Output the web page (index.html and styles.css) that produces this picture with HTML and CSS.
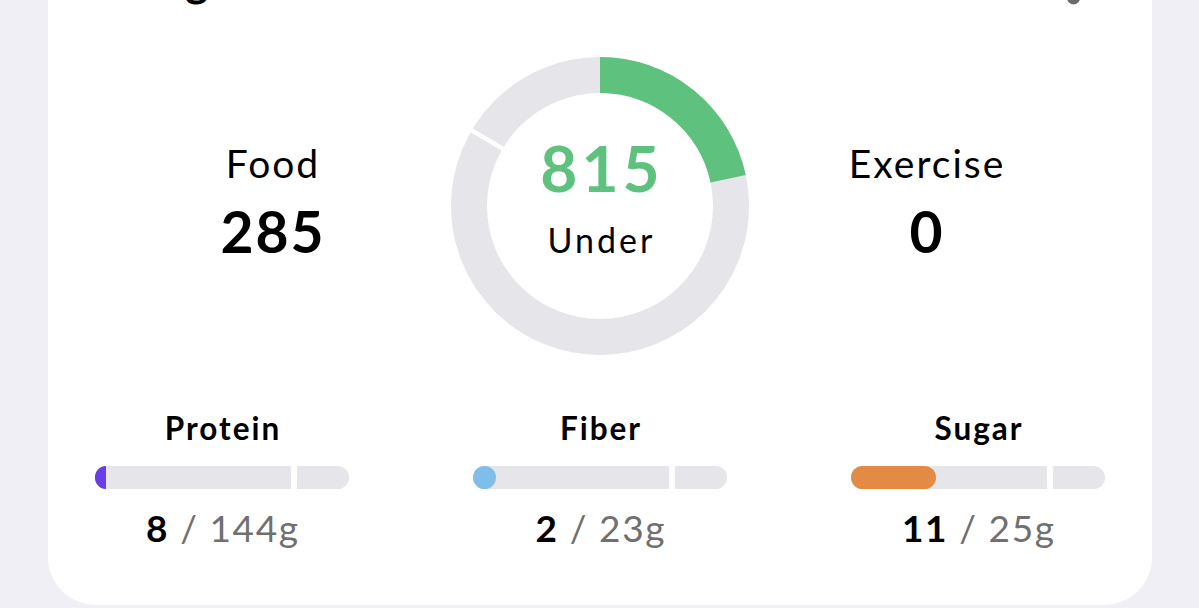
FILE: index.html
```html
<!DOCTYPE html>
<html lang="en">
<head>
<meta charset="utf-8">
<title>Calories</title>
<link rel="stylesheet" href="styles.css">
</head>
<body>
<div class="page">
  <section class="card">
    <header class="card-header">
      <h2 class="card-title">Budget</h2>
      <svg class="more-icon" width="13" height="52" viewBox="0 0 13 52" aria-hidden="true">
        <circle cx="6.5" cy="9" r="6.5"/>
        <circle cx="6.5" cy="27" r="6.5"/>
        <circle cx="6.5" cy="45" r="6.5"/>
      </svg>
    </header>

    <div class="stats">
      <div class="stat">
        <div class="stat-label">Food</div>
        <div class="stat-value">285</div>
      </div>
      <div class="donut">
        <svg width="298" height="298" viewBox="0 0 298 298" aria-hidden="true">
          <circle class="ring-track" cx="149" cy="149" r="131"/>
          <circle class="ring-fill" cx="149" cy="149" r="131" transform="rotate(-90 149 149)" stroke-dasharray="178.3 900"/>
          <line class="ring-gap" x1="149" y1="149" x2="149" y2="-2" transform="rotate(-59.5 149 149)"/>
          <circle class="ring-hole" cx="149" cy="149" r="112.5"/>
        </svg>
        <div class="donut-center">
          <div class="donut-value">815</div>
          <div class="donut-label">Under</div>
        </div>
      </div>
      <div class="stat">
        <div class="stat-label">Exercise</div>
        <div class="stat-value">0</div>
      </div>
    </div>

    <div class="nutrients">
      <div class="nutrient">
        <div class="nutrient-name">Protein</div>
        <div class="bar">
          <div class="bar-main"><div class="bar-fill fill-protein" style="width:11px"></div></div>
          <div class="bar-rest"></div>
        </div>
        <div class="nutrient-value"><b>8</b> <span>/ 144g</span></div>
      </div>
      <div class="nutrient">
        <div class="nutrient-name">Fiber</div>
        <div class="bar">
          <div class="bar-main"><div class="bar-fill fill-fiber" style="width:23px"></div></div>
          <div class="bar-rest"></div>
        </div>
        <div class="nutrient-value"><b>2</b> <span>/ 23g</span></div>
      </div>
      <div class="nutrient">
        <div class="nutrient-name">Sugar</div>
        <div class="bar">
          <div class="bar-main"><div class="bar-fill fill-sugar" style="width:85px"></div></div>
          <div class="bar-rest"></div>
        </div>
        <div class="nutrient-value"><b>11</b> <span>/ 25g</span></div>
      </div>
    </div>
  </section>
</div>
</body>
</html>
```

FILE: styles.css
```css
* { box-sizing: border-box; }

html, body {
  margin: 0;
  padding: 0;
  height: 100%;
  overflow: hidden;
}

body {
  background: #f0eff5;
  font-family: Lato, "Open Sans", sans-serif;
  color: #000;
}

.page {
  padding: 0 47px 0 48px;
}

.card {
  margin-top: -60px;
  background: #fff;
  border-radius: 48px;
  padding: 14px 47px 55px;
}

.card-header {
  display: flex;
  justify-content: space-between;
  align-items: flex-end;
  height: 52px;
}

.card-title {
  margin: 0 0 0 12px;
  font-size: 44px;
  font-weight: 700;
  line-height: 52px;
}

.more-icon {
  display: block;
  margin-right: 25px;
  margin-bottom: 1px;
  fill: #6c6c70;
}

.stats {
  margin-top: 51px;
  display: grid;
  grid-template-columns: 200px 298px 200px;
  column-gap: 78px;
  justify-content: center;
}

.stat {
  padding-top: 83px;
  display: flex;
  flex-direction: column;
  align-items: center;
}

.stat-label {
  font-size: 39px;
  line-height: 46px;
  font-weight: 400;
  letter-spacing: 2px;
}

.stat-value {
  margin-top: 15px;
  font-size: 57px;
  line-height: 60px;
  font-weight: 700;
  letter-spacing: 2px;
}

.donut {
  position: relative;
  width: 298px;
  height: 298px;
}

.donut svg { display: block; }

.ring-track {
  fill: none;
  stroke: #e5e5ea;
  stroke-width: 36;
}

.ring-fill {
  fill: none;
  stroke: #5ec27e;
  stroke-width: 36;
}

.ring-gap {
  stroke: #fff;
  stroke-width: 4.5;
}

.ring-hole { fill: #fff; }

.donut-center {
  position: absolute;
  inset: 0;
  padding-top: 76px;
  display: flex;
  flex-direction: column;
  align-items: center;
}

.donut-value {
  font-size: 64px;
  line-height: 70px;
  font-weight: 700;
  color: #5ec27e;
  letter-spacing: 4px;
  padding-left: 4px;
}

.donut-label {
  margin-top: 17px;
  font-size: 34px;
  line-height: 40px;
  font-weight: 400;
  letter-spacing: 3px;
  padding-left: 3px;
}

.nutrients {
  margin-top: 55px;
  display: grid;
  grid-template-columns: repeat(3, 254px);
  column-gap: 124px;
}

.nutrient {
  display: flex;
  flex-direction: column;
  align-items: center;
}

.nutrient-name {
  font-size: 31.5px;
  line-height: 36px;
  font-weight: 700;
  letter-spacing: 2px;
  padding-left: 2px;
}

.bar {
  margin-top: 20px;
  width: 100%;
  height: 23px;
  display: flex;
  gap: 6px;
}

.bar-main {
  flex: 0 0 196px;
  background: #e5e5ea;
  border-radius: 12px 0 0 12px;
}

.bar-rest {
  flex: 1;
  background: #e5e5ea;
  border-radius: 0 12px 12px 0;
}

.bar-fill {
  height: 100%;
  border-radius: 12px;
}

.fill-protein {
  background: #6a3ee6;
  border-radius: 12px 0 0 12px;
}

.fill-fiber { background: #7fbee9; }

.fill-sugar { background: #e38a45; }

.nutrient-value {
  margin-top: 17px;
  font-size: 37px;
  line-height: 44px;
  letter-spacing: 1.6px;
  padding-left: 1.6px;
}

.nutrient-value b { font-weight: 700; }

.nutrient-value span {
  font-weight: 400;
  color: #707070;
}
```
